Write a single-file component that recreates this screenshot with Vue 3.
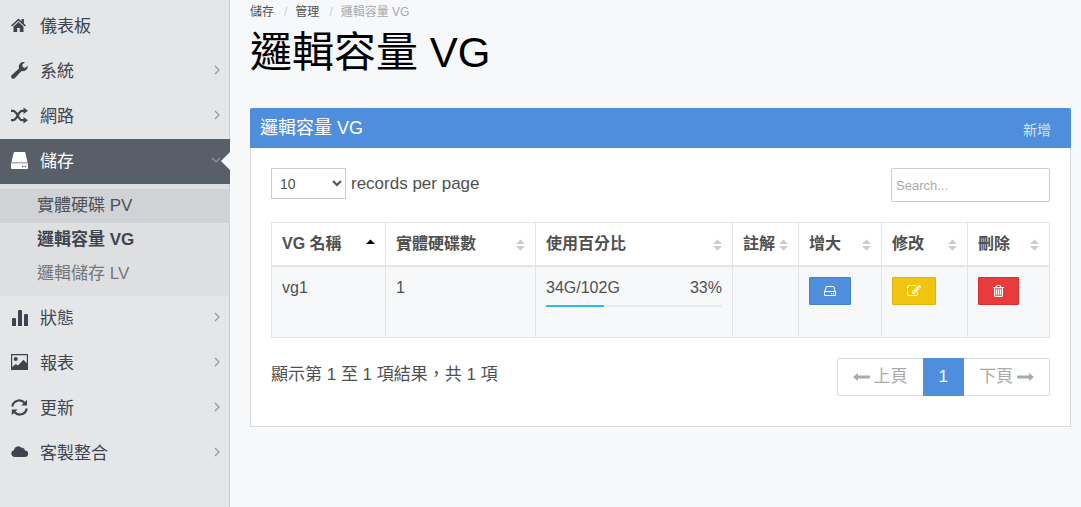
<script setup>
import { ref } from 'vue'

const home = 'M7.500 1.500L0 8.400l1.100 1.200L7.500 3.800l6.400 5.800L15 8.400 12.900 6.400V2h-2.300v2.300zM7.500 5L2.500 9.500V15h3.700v-4h2.600v4h3.700V9.500z'
const wrench = 'M16.700 3.700L13.900 5.900 11.700 4.900 11.300 2.600 14 .4Q9.800-.8 8.200 2.800 7.500 4.600 8 6.400L.6 13.300Q-.4 14.500.6 15.900 2 17.500 3.500 16.400L10.500 9.100Q13.600 9.800 15.500 7.600 17 5.800 16.700 3.700z'
const randomHeads = 'M12.500.6L17 3.800l-4.500 3.200zM12.500 10L17 13.200l-4.500 3.200z'
const randomLines = 'M0 3.800h2C6.500 3.800 7 13.200 11 13.200h2M0 13.200h2C6.500 13.200 7 3.800 11 3.800h2'
const refreshHeads = 'M16 .8v5.700h-5.700zM.8 16.200v-5.700h5.700z'
const refreshLines = 'M1.300 7.500A7 7 0 0 1 13.600 4M15.700 9.500A7 7 0 0 1 3.400 13'
const cloud = 'M3.600 13a3.500 3.500 0 0 1-.6-6.900A4.300 4.300 0 0 1 10.600 3.800 3 3 0 0 1 14 6.400 3.300 3.300 0 0 1 13.700 13z'
const hddOutline = 'M1168 1216q0 33-23.5 56.5t-56.5 23.5-56.5-23.5-23.5-56.5 23.5-56.5 56.5-23.5 56.5 23.5 23.5 56.5zm256 0q0 33-23.5 56.5t-56.5 23.5-56.5-23.5-23.5-56.5 23.5-56.5 56.5-23.5 56.5 23.5 23.5 56.5zm112 160v-320q0-13-9.5-22.5t-22.5-9.5h-1216q-13 0-22.5 9.5t-9.5 22.5v320q0 13 9.5 22.5t22.5 9.5h1216q13 0 22.5-9.5t9.5-22.5zm-1230-480h1180l-157-482q-4-13-16-21.5t-26-8.5h-782q-14 0-26 8.5t-16 21.5zm1358 160v320q0 66-47 113t-113 47h-1216q-66 0-113-47t-47-113v-320q0-25 16-75l197-606q17-53 63-86t101-33h782q55 0 101 33t63 86l197 606q16 50 16 75z'
const edit = 'M888 1184l116-116-152-152-116 116v56h96v96h56zm440-720q-16-16-33 1l-350 350q-17 17-1 33t33-1l350-350q17-17 1-33zm80 594v190q0 119-84.5 203.5t-203.5 84.5h-832q-119 0-203.5-84.5t-84.5-203.5v-832q0-119 84.5-203.5t203.5-84.5h832q63 0 117 25 15 7 18 23 3 17-9 29l-49 49q-14 14-32 8-23-6-45-6h-832q-66 0-113 47t-47 113v832q0 66 47 113t113 47h832q66 0 113-47t47-113v-126q0-13 9-22l64-64q15-15 35-7t20 29zm-96-738l288 288-672 672h-288v-288zm444 132l-92 92-288-288 92-92q28-28 68-28t68 28l152 152q28 28 28 68t-28 68z'
const trash = 'M704 736v576q0 14-9 23t-23 9h-64q-14 0-23-9t-9-23v-576q0-14 9-23t23-9h64q14 0 23 9t9 23zm256 0v576q0 14-9 23t-23 9h-64q-14 0-23-9t-9-23v-576q0-14 9-23t23-9h64q14 0 23 9t9 23zm256 0v576q0 14-9 23t-23 9h-64q-14 0-23-9t-9-23v-576q0-14 9-23t23-9h64q14 0 23 9t9 23zm128 724v-948h-896v948q0 22 7 40.5t14.5 27 10.5 8.5h832q3 0 10.5-8.5t14.5-27 7-40.5zm-672-1076h448l-48-117q-7-9-17-11h-317q-10 2-17 11zm928 32v64q0 14-9 23t-23 9h-96v948q0 83-47 143.5t-113 60.5h-832q-66 0-113-58.5t-47-141.5v-952h-96q-14 0-23-9t-9-23v-64q0-14 9-23t23-9h309l70-167q15-37 54-63t79-26h320q40 0 79 26t54 63l70 167h309q14 0 23 9t9 23z'
const drive = 'M3.600 0h9.800q.7 0 .9.700L16.600 10.400H.4L2.700.7Q2.900 0 3.600 0zM0 11.200h17V16q0 1-1 1H1q-1 0-1-1zM11 13.700v1.500h1.500v-1.500zm2.700 0v1.500h1.500v-1.500z'
const bars = 'M1 10q0-1 1-1h2q1 0 1 1v7H1zM7 2q0-1 1-1h2q1 0 1 1v15H7zM13 6q0-1 1-1h2q1 0 1 1v11h-4z'
const picture = 'M0 0h17v16H0zM1.200 1.200v11.800l3.500-3 2.300 1.600 5.500-5.800 3.300 3.400v-8zM4.700 3a2 2 0 1 1 0 4 2 2 0 0 1 0-4z'

const menu = [
  { label: '儀表板', icon: home },
  { label: '系統', icon: wrench, more: true },
  { label: '網路', icon: randomHeads, lines: randomLines, more: true },
  {
    label: '儲存', icon: drive, more: true, active: true,
    children: [
      { label: '實體硬碟 PV', state: 'hover' },
      { label: '邏輯容量 VG', state: 'current' },
      { label: '邏輯儲存 LV', state: '' },
    ],
  },
  { label: '狀態', icon: bars, more: true },
  { label: '報表', icon: picture, more: true },
  { label: '更新', icon: refreshHeads, lines: refreshLines, more: true },
  { label: '客製整合', icon: cloud, more: true },
]

const columns = [
  { label: 'VG 名稱', width: 114, sorted: true },
  { label: '實體硬碟數', width: 150 },
  { label: '使用百分比', width: 197 },
  { label: '註解', width: 66 },
  { label: '增大', width: 83 },
  { label: '修改', width: 86 },
  { label: '刪除', width: 82 },
]

const rows = [{ name: 'vg1', disks: 1, used: 34, total: 102, percent: 33, note: '' }]
const pageSize = ref('10')
const query = ref('')
</script>

<template>
  <div class="layout">
    <nav class="sidebar">
      <ul class="menu">
        <li v-for="item in menu" :key="item.label">
          <a href="#" class="menu-link" :class="{ active: item.active }">
            <span class="menu-icon">
              <svg viewBox="0 0 17 17" width="17" height="17">
                <path fill-rule="evenodd" :d="item.icon" />
                <path v-if="item.lines" class="lines" :d="item.lines" />
              </svg>
            </span>
            <span class="menu-label">{{ item.label }}</span>
            <svg v-if="item.more" class="chevron" :class="{ open: item.active }" viewBox="0 0 10 10" width="10" height="10">
              <path d="M3 1l4 4-4 4" />
            </svg>
          </a>
          <ul v-if="item.children" class="submenu">
            <li v-for="sub in item.children" :key="sub.label">
              <a href="#" class="sub-link" :class="sub.state">{{ sub.label }}</a>
            </li>
          </ul>
        </li>
      </ul>
    </nav>

    <main class="content">
      <ol class="breadcrumb">
        <li><a href="#">儲存</a></li>
        <li><a href="#">管理</a></li>
        <li class="here">邏輯容量 VG</li>
      </ol>
      <h1>邏輯容量 VG</h1>

      <section class="panel">
        <header class="panel-head">
          <h2>邏輯容量 VG</h2>
          <a href="#">新增</a>
        </header>
        <div class="panel-body">
          <div class="toolbar">
            <label class="length">
              <select v-model="pageSize">
                <option>10</option>
                <option>25</option>
                <option>50</option>
                <option>100</option>
              </select>
              <span>records per page</span>
            </label>
            <input v-model="query" class="search" type="text" placeholder="Search..." aria-label="Search" />
          </div>

          <table>
            <colgroup>
              <col v-for="c in columns" :key="c.label" :style="{ width: c.width + 'px' }" />
            </colgroup>
            <thead>
              <tr>
                <th v-for="c in columns" :key="c.label" scope="col">
                  <div class="th-inner">
                    <span>{{ c.label }}</span>
                    <svg v-if="c.sorted" class="sort sorted" viewBox="0 0 9 12" width="9" height="12"><path d="M0 5l4.500-4.500L9 5z" /></svg>
                    <svg v-else class="sort" viewBox="0 0 9 12" width="9" height="12"><path d="M0 5l4.500-4.500L9 5zM0 7h9l-4.500 4.500z" /></svg>
                  </div>
                </th>
              </tr>
            </thead>
            <tbody>
              <tr v-for="r in rows" :key="r.name">
                <td>{{ r.name }}</td>
                <td>{{ r.disks }}</td>
                <td>
                  <div class="usage">
                    <span>{{ r.used }}G/{{ r.total }}G</span>
                    <span>{{ r.percent }}%</span>
                  </div>
                  <div class="track"><div class="fill" :style="{ width: r.percent + '%' }"></div></div>
                </td>
                <td>{{ r.note }}</td>
                <td>
                  <button type="button" class="btn blue" aria-label="增大"><svg viewBox="128 0 1536 1792" width="12" height="14"><path :d="hddOutline" /></svg></button>
                </td>
                <td>
                  <button type="button" class="btn yellow" aria-label="修改"><svg viewBox="0 0 1792 1792" width="14" height="14"><path :d="edit" /></svg></button>
                </td>
                <td>
                  <button type="button" class="btn red" aria-label="刪除">
                    <svg viewBox="192 0 1408 1792" width="11" height="14">
                      <path fill-opacity=".3" d="M448 512h896v1024H448z" />
                      <path :d="trash" />
                    </svg>
                  </button>
                </td>
              </tr>
            </tbody>
          </table>

          <footer class="table-foot">
            <span class="info">顯示第 1 至 1 項結果，共 1 項</span>
            <div class="pager">
              <a href="#">
                <svg viewBox="0 0 17 8" width="17" height="8"><path d="M0 4l5-4v2.500h11q1 0 1 1v1q0 1-1 1H5V8z" /></svg>
                上頁
              </a>
              <a href="#" class="current">1</a>
              <a href="#">
                下頁
                <svg viewBox="0 0 17 8" width="17" height="8"><path d="M17 4l-5-4v2.500H1q-1 0-1 1v1q0 1 1 1h11V8z" /></svg>
              </a>
            </div>
          </footer>
        </div>
      </section>
    </main>
  </div>
</template>

<style>
body {
  margin: 0;
  background: #f7f8fa;
}
</style>

<style scoped>
.layout {
  display: flex;
  min-height: 100vh;
  font-family: "Liberation Sans", "Noto Sans CJK TC", sans-serif;
  font-size: 16px;
  line-height: 22px;
  color: #505050;
}
.layout * {
  box-sizing: border-box;
}
a {
  color: inherit;
  text-decoration: none;
}
ul,
ol {
  list-style: none;
  margin: 0;
  padding: 0;
}
svg {
  fill: currentColor;
  flex: none;
}
.sidebar {
  flex: 0 0 230px;
  background: #e5e6e8;
  box-shadow: inset -1px 0 #c9cacd;
  color: #3f454f;
  font-size: 17px;
}
.menu {
  padding-top: 4px;
}
.menu-link {
  position: relative;
  display: flex;
  align-items: center;
  height: 45px;
  padding: 0 8px 0 11px;
}
.menu-icon {
  display: flex;
  width: 29px;
  padding-bottom: 2px;
}
.lines {
  fill: none;
  stroke: currentColor;
  stroke-width: 2.2;
}
.menu-label {
  flex: 1;
}
.chevron {
  margin-bottom: 3px;
  fill: none;
  stroke: #94979d;
  stroke-width: 1.2;
}
.chevron.open {
  transform: rotate(90deg);
  margin-right: 1px;
}
.menu-link.active {
  background: #585f69;
  color: #fff;
}
.menu-link.active::after {
  content: "";
  position: absolute;
  right: 0;
  top: 13px;
  border: 9px solid transparent;
  border-left: 0;
  border-right-color: #f7f8fa;
}
.submenu {
  padding: 5px 0;
  background: #dedfe1;
  box-shadow: inset -1px 0 #c9cacd;
}
.sub-link {
  display: block;
  padding: 0 37px;
  line-height: 34px;
  color: #74777c;
}
.sub-link.hover {
  background: #d1d2d5;
  color: #4b5059;
}
.sub-link.current {
  color: #3f454f;
  font-weight: bold;
}
.content {
  flex: 1;
  min-width: 0;
  padding: 2px 10px 20px 20px;
}
.breadcrumb {
  display: flex;
  font-size: 12px;
  line-height: 20px;
}
.breadcrumb li + li::before {
  content: "/";
  padding: 0 8px 0 10px;
  color: #ccc;
}
.breadcrumb .here {
  color: #aaa;
}
h1 {
  margin: 0 0 24px;
  font-size: 42px;
  line-height: 62px;
  font-weight: normal;
  color: #000;
}
.panel {
  border: 1px solid #dadbdd;
  border-top: 0;
  background: #fff;
}
.panel-head {
  display: flex;
  justify-content: space-between;
  align-items: center;
  height: 40px;
  margin: 0 -1px;
  padding: 0 20px 0 10px;
  border-radius: 2px 2px 0 0;
  background: #4f8edc;
  color: #fff;
}
h2 {
  margin: 0;
  font-size: 18px;
  font-weight: normal;
}
.panel-head a {
  padding-top: 4px;
  font-size: 14px;
  color: #d3e3f7;
}
.panel-body {
  padding: 20px 20px 30px;
}
.toolbar {
  display: flex;
  justify-content: space-between;
  margin-bottom: 20px;
}
.length {
  display: flex;
  gap: 5px;
  height: 31px;
  align-items: center;
  font-size: 17px;
}
.length select {
  width: 75px;
  height: 31px;
  padding: 0 4px;
  border: 1px solid #ccc;
  background: #fff;
  color: #505050;
  font: 14px "Liberation Sans", sans-serif;
}
.search {
  width: 159px;
  height: 34px;
  padding: 0 4px;
  border: 1px solid #ccc;
  border-radius: 2px;
  font: 13px "Liberation Sans", sans-serif;
}
.search::placeholder {
  color: #aaa;
}
table {
  width: 100%;
  table-layout: fixed;
  border-collapse: collapse;
  border: 1px solid #e3e4e6;
}
th,
td {
  border: 1px solid #e3e4e6;
  padding: 10px 10px 0;
  text-align: left;
  vertical-align: top;
}
th {
  height: 43px;
  border-bottom-width: 2px;
}
td {
  height: 72px;
  background: #f7f8fa;
}
.th-inner {
  display: flex;
  justify-content: space-between;
  white-space: nowrap;
}
.sort {
  margin-top: 6px;
  color: #ccc;
}
.sort.sorted {
  color: #000;
}
.usage {
  display: flex;
  justify-content: space-between;
}
.track {
  height: 2px;
  margin-top: 6px;
  background: #eaebed;
}
.fill {
  height: 2px;
  background: #2fbce0;
}
.btn {
  display: flex;
  align-items: center;
  height: 28px;
  padding: 0 14px;
  border: 1px solid;
  border-radius: 1px;
  color: #fff;
}
.blue {
  background: #4f8edc;
  border-color: #4481cf;
}
.yellow {
  background: #f1c40f;
  border-color: #deb30c;
}
.red {
  background: #e83c3c;
  border-color: #d83030;
}
.table-foot {
  display: flex;
  justify-content: space-between;
  margin-top: 20px;
  font-size: 17px;
}
.info {
  padding-top: 6px;
}
.pager {
  display: flex;
  height: 38px;
  border: 1px solid #dadbdd;
  border-radius: 2px;
  color: #aaa;
}
.pager a {
  display: flex;
  align-items: center;
  gap: 4px;
  padding: 0 15px;
}
.pager .current {
  margin: -1px 0;
  padding: 0 16px;
  background: #4f8edc;
  color: #fff;
}
</style>
